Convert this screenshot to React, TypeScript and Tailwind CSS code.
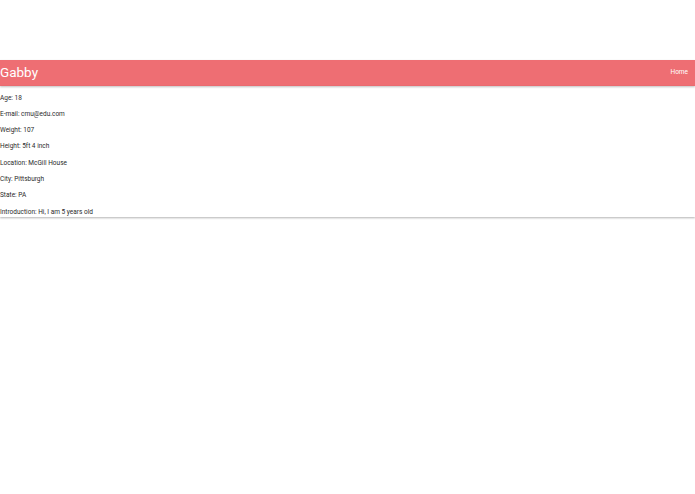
import React from 'react';

const fields: [string, string][] = [
  ['Age', '18'],
  ['E-mail', 'cmu@edu.com'],
  ['Weight', '107'],
  ['Height', '5ft 4 inch'],
  ['Location', 'McGill House'],
  ['City', 'Pittsburgh'],
  ['State', 'PA'],
  ['Introduction', 'Hi, I am 5 years old'],
];

export default function App() {
  return (
    <div className="min-h-screen bg-white pt-[60px] font-['Roboto',sans-serif] text-[#2a2a2a]">
      <nav className="flex h-[26px] items-center justify-between bg-[#ee6e73] text-white shadow-[0_1px_2px_rgba(0,0,0,0.25)]">
        <span className="text-[13.5px] leading-none">Gabby</span>
        <a className="pr-[7px] text-[6.5px]">Home</a>
      </nav>
      <div className="flex flex-col gap-[6.3px] pt-[6.5px] shadow-[0_1px_2px_rgba(0,0,0,0.3)]">
        {fields.map(([label, value]) => (
          <p key={label} className="text-[6.5px] leading-[10px]">
            {label}: {value}
          </p>
        ))}
      </div>
    </div>
  );
}
